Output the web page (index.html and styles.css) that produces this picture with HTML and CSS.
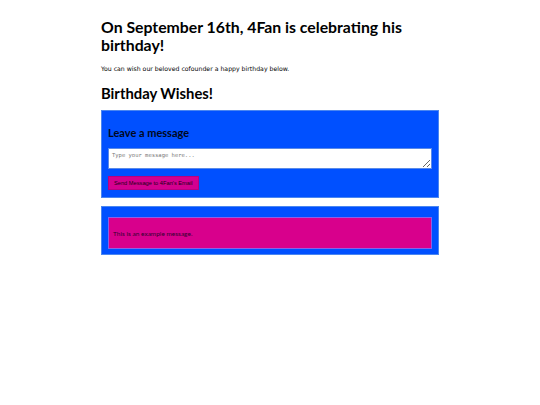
FILE: index.html
```
<!DOCTYPE html>
<html>
<head>
<meta charset="utf-8">
<link rel="stylesheet" href="styles.css">
</head>
<body>
<div class="page">
  <h1 class="title">On September 16th, 4Fan is celebrating his birthday!</h1>
  <p class="intro">You can wish our beloved cofounder a happy birthday below.</p>
  <h2 class="section">Birthday Wishes!</h2>
  <div class="panel form-panel">
    <h3 class="panel-title">Leave a message</h3>
    <textarea class="message-input" placeholder="Type your message here..."></textarea>
    <button class="send-btn">Send Message to 4Fan's Email</button>
  </div>
  <div class="panel list-panel">
    <div class="message">This is an example message.</div>
  </div>
</div>
</body>
</html>
```
FILE: styles.css
```
html, body {
  margin: 0;
  padding: 0;
  background: #ffffff;
}
body {
  font-family: "Comic Sans MS", Lato, "DejaVu Sans", sans-serif;
  color: #000;
}
.page {
  width: 338px;
  margin: 0 auto;
  padding-top: 18px;
}
.title {
  font-size: 15.8px;
  line-height: 18px;
  font-weight: bold;
  margin: 0 0 10px 0;
}
.intro {
  font-family: "DejaVu Sans", sans-serif;
  font-size: 6.2px;
  line-height: 10px;
  margin: 0 0 10px 0;
}
.section {
  font-size: 14.8px;
  line-height: 18px;
  font-weight: bold;
  margin: 0 0 8px 0;
}
.panel {
  background: #0050ff;
  border: 1px solid #4a86f0;
  padding: 6px;
}
.form-panel {
  display: flex;
  flex-direction: column;
  align-items: flex-start;
  padding-bottom: 7px;
}
.panel-title {
  font-size: 11px;
  line-height: 14px;
  font-weight: bold;
  margin: 9px 0 8px 0;
  color: #000820;
}
.message-input {
  box-sizing: border-box;
  width: 100%;
  height: 21px;
  margin: 0 0 7px 0;
  border: 1px solid #5a8ae8;
  background: #fff;
  font-family: "DejaVu Sans Mono", monospace;
  font-size: 5.5px;
  padding: 3px 3px;
  resize: vertical;
}
.message-input::placeholder {
  color: #777;
}
.send-btn {
  height: 14px;
  padding: 0 5px;
  background: #d4008f;
  border: 1px solid #b80080;
  color: #200018;
  font-family: "Liberation Sans", sans-serif;
  font-size: 5.7px;
}
.list-panel {
  margin-top: 8px;
  padding-top: 10px;
  padding-bottom: 5px;
}
.message {
  background: #d8008c;
  border: 1px solid #8a60e8;
  height: 30px;
  padding: 0 4px;
  display: flex;
  align-items: center;
  font-size: 6.5px;
  color: #300030;
}
```
